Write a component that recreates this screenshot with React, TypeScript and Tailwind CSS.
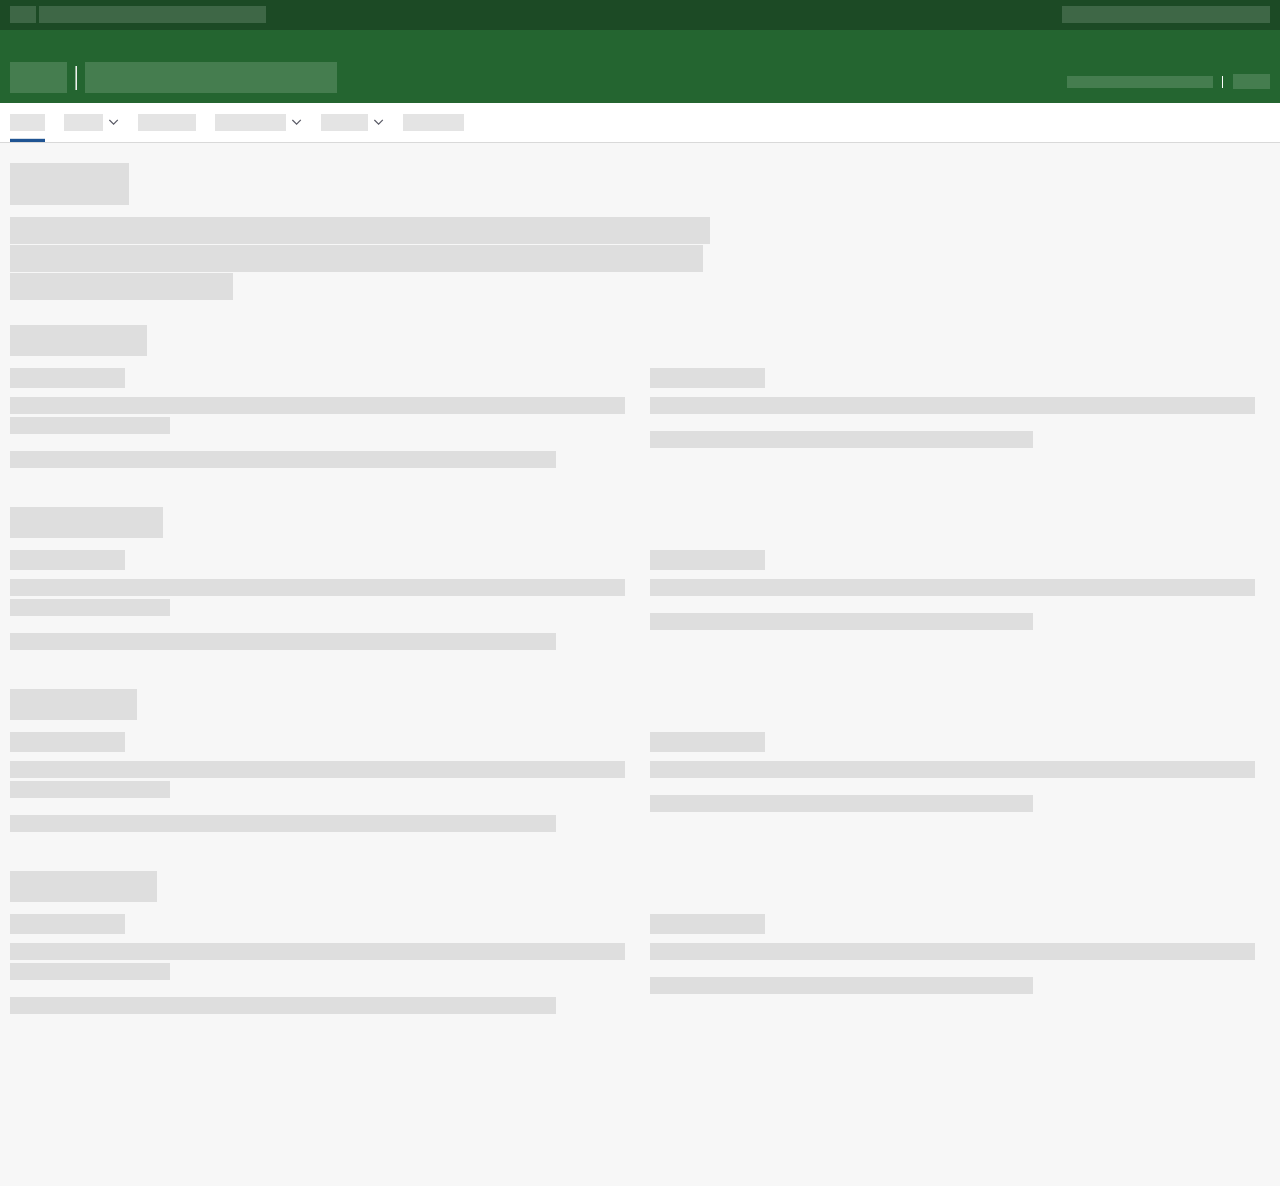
const navItems = [
  { label: "Home", width: "w-[35px]", menu: false, active: true },
  { label: "Menu 1", width: "w-[39px]", menu: true, active: false },
  { label: "Page 1", width: "w-[58px]", menu: false, active: false },
  { label: "Menu 2", width: "w-[71px]", menu: true, active: false },
  { label: "Menu 3", width: "w-[47px]", menu: true, active: false },
  { label: "Page 2", width: "w-[61px]", menu: false, active: false },
];

const sections = ["w-[137px]", "w-[153px]", "w-[127px]", "w-[147px]"];

function Bar({ className }: { className: string }) {
  return <span className={`block max-w-full shrink-0 ${className}`} />;
}

function Chevron() {
  return (
    <svg width="10" height="7" viewBox="0 0 10 7" fill="none" stroke="#5a5b66" strokeWidth="1.25" aria-hidden="true">
      <path d="M0.4 0.9 4.6 5.1 8.8 0.9" />
    </svg>
  );
}

function NavEntry({ item }: { item: (typeof navItems)[number] }) {
  const content = (
    <>
      <Bar className={`h-[17px] bg-[#e4e4e4] ${item.width}`} />
      {item.menu && <Chevron />}
    </>
  );
  if (item.menu) {
    return (
      <button type="button" aria-label={item.label} aria-haspopup="menu" className="flex h-full items-center gap-1.5">
        {content}
      </button>
    );
  }
  return (
    <a
      href="#"
      aria-label={item.label}
      aria-current={item.active ? "page" : undefined}
      className={`flex h-full items-center ${item.active ? "border-b-3 border-[#1f5493] pt-[3px] shadow-[inset_0_-1px_#d3dce6]" : ""}`}
    >
      {content}
    </a>
  );
}

function Section({ heading }: { heading: string }) {
  return (
    <section className="mb-[39px]">
      <Bar className={`h-[31px] bg-[#dedede] ${heading}`} />
      <div className="mt-3 grid grid-cols-2">
        <div className="pr-[15px]">
          <Bar className="h-5 w-[115px] bg-[#dedede]" />
          <Bar className="mt-[9px] h-[17px] w-full bg-[#dedede]" />
          <Bar className="mt-[3px] h-[17px] w-[160px] bg-[#dedede]" />
          <Bar className="mt-[17px] h-[17px] w-[546px] bg-[#dedede]" />
        </div>
        <div className="pl-2.5 pr-[15px]">
          <Bar className="h-5 w-[115px] bg-[#dedede]" />
          <Bar className="mt-[9px] h-[17px] w-full bg-[#dedede]" />
          <Bar className="mt-[17px] h-[17px] w-[383px] bg-[#dedede]" />
        </div>
      </div>
    </section>
  );
}

export default function App() {
  return (
    <div className="flex min-h-screen flex-col bg-[#f7f7f7] font-['Liberation_Sans',sans-serif]">
      <header>
        <div className="flex justify-between bg-[#1c4a25] px-2.5 pb-[7px] pt-1.5">
          <div className="flex gap-[3px]">
            <Bar className="h-[17px] w-[26px] bg-[#3e6746]" />
            <Bar className="h-[17px] w-[227px] bg-[#3e6746]" />
          </div>
          <Bar className="h-[17px] w-[208px] bg-[#3e6746]" />
        </div>
        <div className="flex items-end justify-between bg-[#246530] px-2.5 pb-2.5 pt-8">
          <div className="flex items-center gap-2">
            <Bar className="h-[31px] w-[57px] bg-[#457d4f]" />
            <Bar className="h-6 w-0.5 border-l border-[#94b498] bg-[#edf1ed]" />
            <Bar className="h-[31px] w-[252px] bg-[#457d4f]" />
          </div>
          <div className="mb-1 flex items-center">
            <Bar className="h-3 w-[146px] bg-[#457d4f]" />
            <Bar className="ml-[9px] mr-2.5 h-3 w-px bg-white" />
            <Bar className="h-[15px] w-[37px] bg-[#457d4f]" />
          </div>
        </div>
      </header>
      <nav aria-label="Main" className="border-b border-[#d9d9d9] bg-white px-2.5">
        <ul className="flex h-[39px] gap-[19px]">
          {navItems.map((item) => (
            <li key={item.label}>
              <NavEntry item={item} />
            </li>
          ))}
        </ul>
      </nav>
      <main className="px-2.5 pt-5">
        <Bar className="h-[42px] w-[119px] bg-[#dedede]" />
        <div className="mb-[25px] mt-3 flex flex-col gap-px">
          <Bar className="h-[27px] w-[700px] bg-[#dedede]" />
          <Bar className="h-[27px] w-[693px] bg-[#dedede]" />
          <Bar className="h-[27px] w-[223px] bg-[#dedede]" />
        </div>
        <div>
          {sections.map((heading) => (
            <Section key={heading} heading={heading} />
          ))}
        </div>
      </main>
    </div>
  );
}
